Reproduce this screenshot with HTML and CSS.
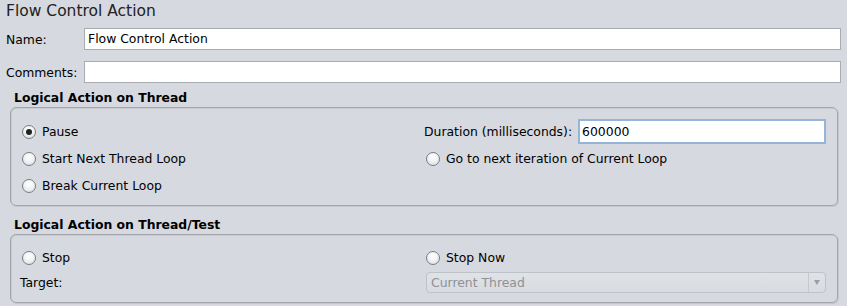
FILE: index.html
```html
<!DOCTYPE html>
<html>
<head>
<meta charset="utf-8">
<link rel="stylesheet" href="styles.css">
</head>
<body>
<div class="page">
  <div class="title">Flow Control Action</div>
  <div class="field">
    <label class="flabel">Name:</label>
    <div class="input">Flow Control Action</div>
  </div>
  <div class="field">
    <label class="flabel">Comments:</label>
    <div class="input"></div>
  </div>

  <div class="group-title">Logical Action on Thread</div>
  <div class="panel panel1">
    <div class="cell"><span class="radio checked"></span>Pause</div>
    <div class="cell right"><span class="dlabel">Duration (milliseconds):</span><div class="input dur">600000</div></div>
    <div class="cell"><span class="radio"></span>Start Next Thread Loop</div>
    <div class="cell right2"><span class="radio"></span>Go to next iteration of Current Loop</div>
    <div class="cell"><span class="radio"></span>Break Current Loop</div>
    <div class="cell"></div>
  </div>

  <div class="group-title gt2">Logical Action on Thread/Test</div>
  <div class="panel panel2">
    <div class="cell"><span class="radio"></span>Stop</div>
    <div class="cell right2"><span class="radio"></span>Stop Now</div>
    <div class="cell tlabel">Target:</div>
    <div class="cell right2"><div class="select"><span>Current Thread</span><span class="arrow"></span></div></div>
  </div>
</div>
</body>
</html>
```
FILE: styles.css
```css
html, body {
  margin: 0;
  padding: 0;
  background: #d6d9df;
}
body {
  font-family: "DejaVu Sans", sans-serif;
  font-size: 12.4px;
  color: #000;
  width: 847px;
  height: 306px;
  overflow: hidden;
}
.page {
  display: flex;
  flex-direction: column;
}
.title {
  font-size: 15.5px;
  color: #222;
  padding: 1px 0 0 6px;
  height: 27px;
  line-height: 20px;
}
.field {
  display: flex;
  align-items: center;
  height: 22px;
  margin-bottom: 11px;
}
.flabel {
  width: 78px;
  padding-left: 6px;
  flex: none;
}
.input {
  flex: 1;
  height: 20px;
  line-height: 20px;
  background: #fff;
  border: 1px solid #a8abb0;
  margin-right: 6px;
  padding-left: 3px;
}
.group-title {
  font-weight: bold;
  padding-left: 14px;
  height: 17px;
  line-height: 16px;
  margin-top: -4px;
}
.gt2 {
  margin-top: 11px;
}
.panel {
  margin: 0 9px 0 10px;
  border: 1px solid #a2a5aa;
  border-radius: 6px;
  box-shadow: inset 1px 1px 0 #c8cbd0, 1px 1px 0 #c4c7cc;
  display: grid;
  grid-template-columns: 402px 1fr;
  padding: 10px 11px 6px 11px;
}
.panel1 {
  grid-auto-rows: 27px;
}
.panel2 {
  grid-auto-rows: 25px;
  padding-bottom: 7px;
}
.cell {
  display: flex;
  align-items: center;
}
.right2 {
  padding-left: 2px;
}
.dlabel {
  margin-right: 6px;
}
.input.dur {
  margin-right: 0;
  height: 21px;
  line-height: 21px;
  border: 2px solid #94b4d8;
  padding-left: 2px;
}
.radio {
  width: 12px;
  height: 12px;
  border-radius: 50%;
  border: 1px solid #7a7d82;
  background: radial-gradient(circle at 50% 35%, #ffffff 0%, #f2f3f5 45%, #d3d6db 100%);
  margin-right: 6px;
  flex: none;
  position: relative;
}
.radio.checked::after {
  content: "";
  position: absolute;
  left: 3px;
  top: 3px;
  width: 6px;
  height: 6px;
  border-radius: 50%;
  background: #222;
}
.tlabel {
  margin-left: -2px;
}
.select {
  flex: 1;
  height: 19px;
  border: 1px solid #bfc2c7;
  border-radius: 4px;
  background: linear-gradient(#dfe2e6, #d8dbe0);
  color: #8e9196;
  display: flex;
  align-items: center;
  justify-content: space-between;
  padding-left: 4px;
}
.arrow {
  width: 16px;
  height: 19px;
  border-left: 1px solid #c6c9ce;
  display: flex;
  align-items: center;
  justify-content: center;
}
.arrow::after {
  content: "";
  border-left: 3px solid transparent;
  border-right: 3px solid transparent;
  border-top: 5px solid #9a9da2;
}
```
